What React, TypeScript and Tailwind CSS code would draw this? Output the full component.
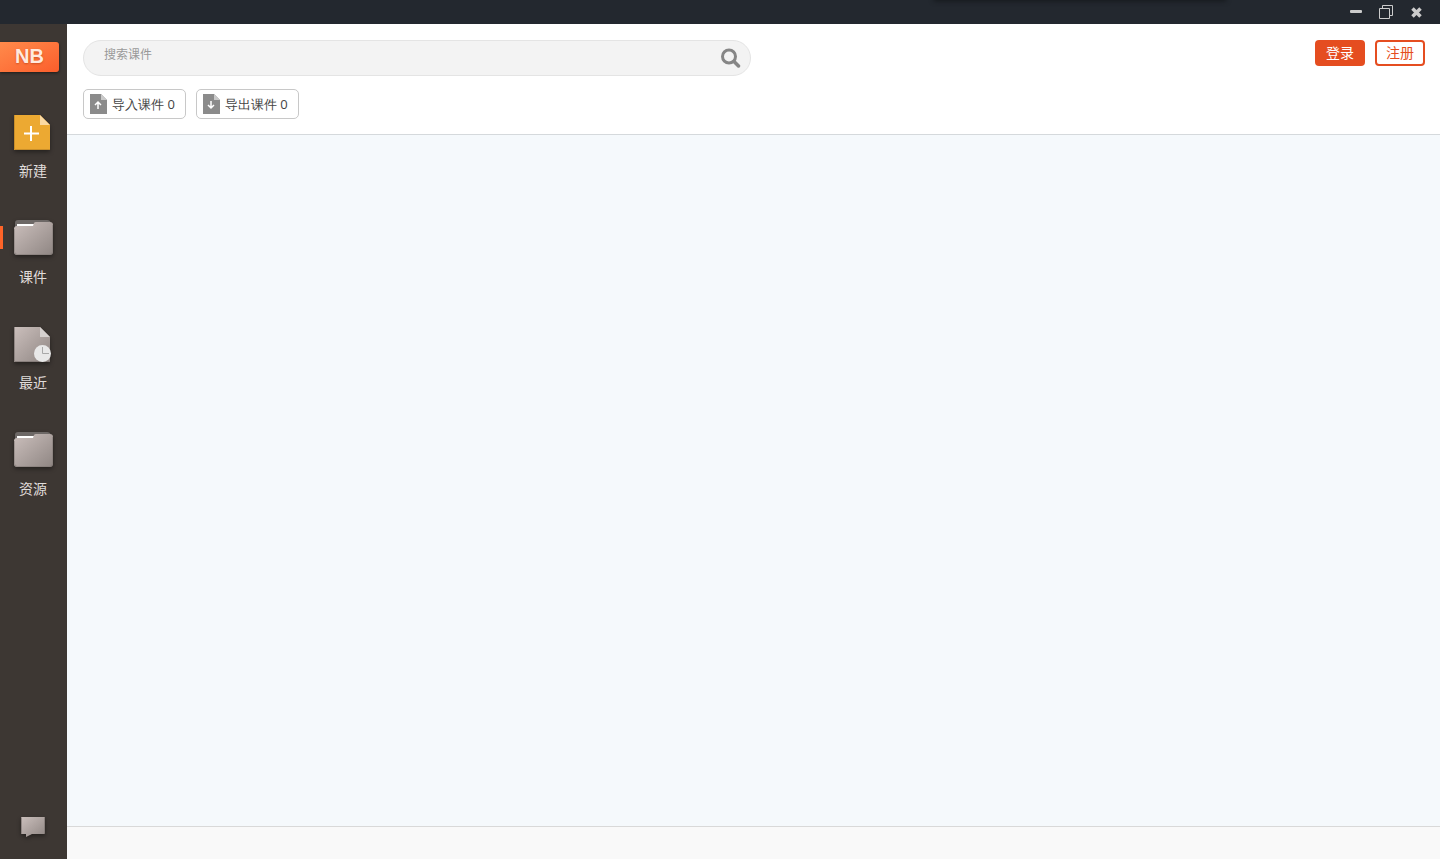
import React from 'react'

const GreyGradient = ({ id }: { id: string }) => (
  <linearGradient id={id} x1="0" y1="0" x2="1" y2="1">
    <stop offset="0" stopColor="#cbbfbc" />
    <stop offset="1" stopColor="#8f8683" />
  </linearGradient>
)

const iconClass = 'ml-[7px] size-12 drop-shadow-[0_2px_2px_rgba(0,0,0,0.4)]'

const NewIcon = () => (
  <svg className={iconClass} viewBox="0 0 48 48" aria-hidden="true">
    <path d="M4 7h26l10 10v25H4z" fill="#eca932" />
    <path d="M4.5 7v34.5H40" fill="none" stroke="#c98f2b" />
    <path d="M30 7l10 10H30z" fill="#fbd9a2" />
    <path d="M21 18v15M14 25.500h15" stroke="#fff" strokeWidth="2" />
  </svg>
)

const FolderIcon = ({ id }: { id: string }) => (
  <svg className={iconClass} viewBox="0 0 48 48" aria-hidden="true">
    <defs>
      <GreyGradient id={id} />
    </defs>
    <path d="M8 6h29q3 0 4 3v6H5V9q0-3 3-3z" fill="#6d6866" />
    <path d="M7 10h17v3H7z" fill="#fff" />
    <path d="M7 12h16l1-3q.5-1 2-1h14q3 0 3 3v27q0 3-3 3H7q-3 0-3-3V15q0-3 3-3z" fill={`url(#${id})`} />
    <path d="M4.500 15v22.500q0 3 3 3h32q3 0 3-3V11" fill="none" stroke="#7d7572" strokeOpacity="0.5" />
  </svg>
)

const RecentIcon = () => (
  <svg className={iconClass} viewBox="0 0 48 48" aria-hidden="true">
    <defs>
      <GreyGradient id="recent" />
    </defs>
    <path d="M4 7h26l10 10v25H4z" fill="url(#recent)" />
    <path d="M4.500 7v34.500H40" fill="none" stroke="#7d7572" strokeOpacity="0.7" />
    <path d="M30 7l10 10H30z" fill="#d5d0ce" />
    <circle cx="32.500" cy="33.500" r="8.500" fill="#e8e8e8" />
    <path d="M32.500 27v6.500H39" fill="none" stroke="#a8a8a8" />
  </svg>
)

const ChatIcon = () => (
  <svg className="h-6 w-6 drop-shadow-[0_2px_2px_rgba(0,0,0,0.4)]" viewBox="0 0 24 24" aria-hidden="true">
    <defs>
      <GreyGradient id="chat" />
    </defs>
    <path d="M1 1h22q1 0 1 1v15q0 1-1 1H11l-6 3v-3H1q-1 0-1-1V2q0-1 1-1z" fill="url(#chat)" />
    <path d="M.5 2v15M23.500 2v15" stroke="#7d7572" strokeOpacity="0.7" />
  </svg>
)

const TransferIcon = ({ down }: { down?: boolean }) => (
  <svg className="h-5 w-[17px]" viewBox="0 0 17 20" aria-hidden="true">
    <path d="M0 0h11l6 6v14H0z" fill="#8b8b8b" />
    <path d="M11 0l6 6h-6z" fill="#c9c9c9" />
    <path
      d={down ? 'M8 7v7M5 11l3 3 3-3' : 'M8 15V8M5 11l3-3 3 3'}
      fill="none"
      stroke="#fff"
      strokeWidth="1.500"
    />
  </svg>
)

const navItems = [
  { label: '新建', icon: <NewIcon /> },
  { label: '课件', icon: <FolderIcon id="courses" />, active: true },
  { label: '最近', icon: <RecentIcon /> },
  { label: '资源', icon: <FolderIcon id="resources" /> },
]

const TitleBar = () => (
  <div className="relative flex h-6 shrink-0 items-center justify-end overflow-hidden bg-[#23282f] pr-3">
    <div className="absolute -top-1 left-[935px] h-1 w-[290px] shadow-[0_0_5px_1px_#14181b]" />
    <button type="button" aria-label="最小化" className="flex size-6 items-center justify-center">
      <svg className="size-4" viewBox="0 0 16 16">
        <rect x="2" y="6" width="12" height="3" rx="1" fill="#ccc" />
      </svg>
    </button>
    <button type="button" aria-label="还原" className="ml-[6px] flex size-6 items-center justify-center">
      <svg className="size-4" viewBox="0 0 16 16" fill="none" stroke="#ccc">
        <path d="M1.500 4.500h10v10h-10zM4.500 4.500v-3h10v10h-3" />
      </svg>
    </button>
    <button type="button" aria-label="关闭" className="ml-[6px] flex size-6 items-center justify-center">
      <svg className="size-4" viewBox="0 0 16 16">
        <path d="M4.500 4.500l8 8M12.500 4.500l-8 8" stroke="#ccc" strokeWidth="3.500" />
      </svg>
    </button>
  </div>
)

const Sidebar = () => (
  <aside className="flex w-[67px] shrink-0 flex-col bg-[#3d3733] pt-[18px]">
    <div className="flex h-[30px] w-[59px] items-center justify-center rounded-r-[3px] bg-linear-to-br from-[#ff8a4b] to-[#fb5d2b] font-['Liberation_Sans'] text-xl leading-7 font-bold text-[#ffe9df] shadow-[0_1px_3px_rgba(0,0,0,0.5)]">
      <span className="pb-[2px] [text-shadow:0_1px_2px_rgba(180,60,20,0.6)]">NB</span>
    </div>
    <nav className="mt-[26px]">
      {navItems.map((item) => (
        <button key={item.label} type="button" className="block h-[106px] w-full pt-[10px] pb-[23px] text-sm text-[#e0dddb]">
          <span className="flex items-center">
            <span className={item.active ? 'mb-[2px] h-[23px] w-[3px] bg-[#ff6428]' : 'h-[23px] w-[3px]'} />
            {item.icon}
          </span>
          <span className="mt-[5px] block pr-px leading-5">{item.label}</span>
        </button>
      ))}
    </nav>
    <button type="button" aria-label="反馈" className="mt-auto mb-[19px] flex justify-center pr-px">
      <ChatIcon />
    </button>
  </aside>
)

const transferClass =
  'flex h-[30px] items-center gap-[5px] rounded-[5px] border border-[#c8c8c8] bg-white pr-[10px] pl-[6px] text-[13px] text-[#444]'

const Header = () => (
  <header className="flex items-start justify-between border-b border-[#d5d9dc] bg-white pt-4 pr-[15px] pb-[15px] pl-4">
    <div className="w-full max-w-[668px]">
      <form className="flex h-9 items-center rounded-full border border-[#e4e4e4] bg-[#f3f3f3] pr-[9px] pl-5">
        <input
          type="text"
          aria-label="搜索课件"
          placeholder="搜索课件"
          className="h-full min-w-0 flex-1 bg-transparent pb-2 text-xs text-[#444] outline-none placeholder:text-[#999]"
        />
        <button type="button" aria-label="搜索">
          <svg className="size-5" viewBox="0 0 20 20" fill="none" stroke="#868686">
            <circle cx="8" cy="8.500" r="6.500" strokeWidth="3" />
            <path d="M13 13.500l4.500 4.500" strokeWidth="3.500" strokeLinecap="round" />
          </svg>
        </button>
      </form>
      <div className="mt-[13px] flex gap-[10px]">
        <button type="button" className={transferClass}>
          <TransferIcon />
          <span className="pt-[2px] font-['Open_Sans']">导入课件 0</span>
        </button>
        <button type="button" className={transferClass}>
          <TransferIcon down />
          <span className="pt-[2px] font-['Open_Sans']">导出课件 0</span>
        </button>
      </div>
    </div>
    <div className="flex shrink-0 gap-[10px] text-sm">
      <button
        type="button"
        className="flex h-[26px] w-[50px] items-center justify-center rounded-[4px] bg-[#e54d20] text-white"
      >
        登录
      </button>
      <button
        type="button"
        className="flex h-[26px] w-[50px] items-center justify-center rounded-[4px] border-2 border-[#e54d20] text-[#e54d20]"
      >
        注册
      </button>
    </div>
  </header>
)

const App = () => (
  <div className="flex min-h-screen flex-col [font-family:Noto_Sans,Noto_Sans_CJK_SC,sans-serif]">
    <TitleBar />
    <div className="flex flex-1">
      <Sidebar />
      <div className="flex min-w-0 flex-1 flex-col">
        <Header />
        <main className="flex-1 bg-[#f5f9fc]" />
        <footer className="h-[33px] border-t border-[#d9d9d9] bg-[#f9f9f9]" />
      </div>
    </div>
  </div>
)

export default App
